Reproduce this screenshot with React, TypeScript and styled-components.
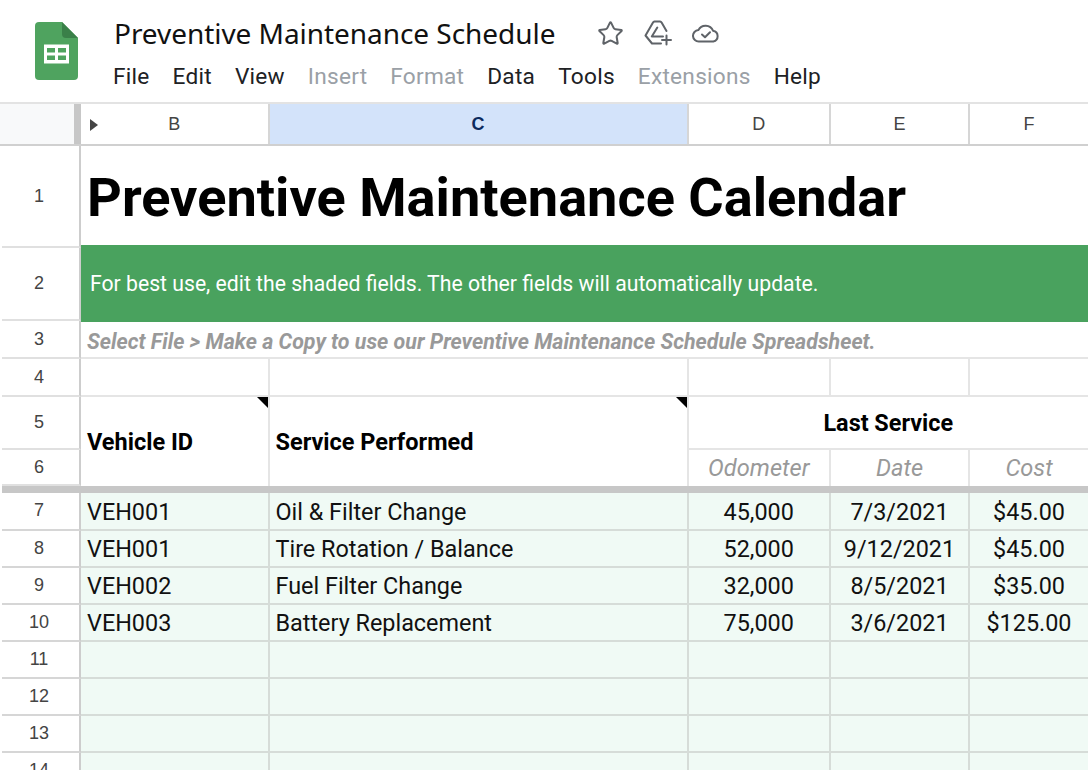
import styled, { createGlobalStyle } from "styled-components";
import { Star } from "lucide-react";

const rows = [
    { n: 7, id: "VEH001", service: "Oil & Filter Change", odo: "45,000", date: "7/3/2021", cost: "$45.00" },
    { n: 8, id: "VEH001", service: "Tire Rotation / Balance", odo: "52,000", date: "9/12/2021", cost: "$45.00" },
    { n: 9, id: "VEH002", service: "Fuel Filter Change", odo: "32,000", date: "8/5/2021", cost: "$35.00" },
    { n: 10, id: "VEH003", service: "Battery Replacement", odo: "75,000", date: "3/6/2021", cost: "$125.00" },
    { n: 11 }, { n: 12 }, { n: 13 }, { n: 14 },
];

const menu = [
    { label: "File" }, { label: "Edit" }, { label: "View" },
    { label: "Insert", off: true }, { label: "Format", off: true },
    { label: "Data" }, { label: "Tools" },
    { label: "Extensions", off: true }, { label: "Help" },
];

const App = () => (
    <Page>
        <GlobalStyle />
        <Header>
            <Logo />
            <HeaderText>
                <TitleRow>
                    <DocTitle>Preventive Maintenance Schedule</DocTitle>
                    <Icons>
                        <Star size={27} strokeWidth={1.8} color="#5f6368" />
                        <DriveAdd />
                        <CloudCheck />
                    </Icons>
                </TitleRow>
                <Menu>
                    {menu.map((m) => (
                        <MenuItem key={m.label} $off={m.off}>{m.label}</MenuItem>
                    ))}
                </Menu>
            </HeaderText>
        </Header>

        <ColumnBar>
            <Corner />
            <ColHead><Arrow />B</ColHead>
            <ColHead $active>C</ColHead>
            <ColHead>D</ColHead>
            <ColHead>E</ColHead>
            <ColHead $last>F</ColHead>
        </ColumnBar>

        <Sheet>
            <RowHead>1</RowHead>
            <TitleCell>Preventive Maintenance Calendar</TitleCell>

            <RowHead>2</RowHead>
            <BannerCell>For best use, edit the shaded fields. The other fields will automatically update.</BannerCell>

            <RowHead>3</RowHead>
            <HintCell>Select File &gt; Make a Copy to use our Preventive Maintenance Schedule Spreadsheet.</HintCell>

            <RowHead>4</RowHead>
            <Cell /><Cell /><Cell /><Cell /><Cell $last />

            <RowHead>5</RowHead>
            <HeadCell>Vehicle ID<Note /></HeadCell>
            <HeadCell>Service Performed<Note /></HeadCell>
            <GroupCell>Last Service</GroupCell>

            <RowHead>6</RowHead>
            <SubCell>Odometer</SubCell>
            <SubCell>Date</SubCell>
            <SubCell $last>Cost</SubCell>

            <FreezeBar />

            {rows.map((r) => (
                <DataRow key={r.n}>
                    <RowHead $shaded>{r.n}</RowHead>
                    <DataCell>{r.id}</DataCell>
                    <DataCell>{r.service}</DataCell>
                    <DataCell $center>{r.odo}</DataCell>
                    <DataCell $center>{r.date}</DataCell>
                    <DataCell $center $last>{r.cost}</DataCell>
                </DataRow>
            ))}
        </Sheet>
    </Page>
);

const Logo = () => (
    <LogoSvg viewBox="0 0 43 58" width="43" height="58">
        <path d="M4 0H27L43 16V54a4 4 0 0 1-4 4H4a4 4 0 0 1-4-4V4a4 4 0 0 1 4-4z" fill="#4fa35f" />
        <path d="M27 0L43 16H31a4 4 0 0 1-4-4z" fill="#3a8049" />
        <path d="M9 22.5H34V41.5H9z" fill="#fff" />
        <path d="M12 26H20V30.5H12zM23 26H31V30.5H23zM12 33.5H20V38H12zM23 33.5H31V38H23z" fill="#4fa35f" />
    </LogoSvg>
);

const DriveAdd = () => (
    <svg viewBox="0 0 28 26" width="28" height="26" fill="none" stroke="#5f6368" strokeWidth="2" strokeLinejoin="round" strokeLinecap="round">
        <path d="M17 23.5H8L1.5 15.5 9 2.5a2 2 0 0 1 1.5-1H16a2 2 0 0 1 1.6 1L22.5 11" />
        <path d="M13.3 7.5L7.8 16.5H19" />
        <path d="M22.5 15.5V24.5M18 20H27" />
    </svg>
);

const CloudCheck = () => (
    <svg viewBox="0 0 28 20" width="28" height="20" fill="none" stroke="#5f6368" strokeWidth="2" strokeLinejoin="round" strokeLinecap="round">
        <path d="M7 18.5a5.7 5.7 0 0 1-.6-11.4A8 8 0 0 1 21 7.7a5.5 5.5 0 0 1 .3 10.8z" />
        <path d="M10 11.5l3 2.8 5-5" />
    </svg>
);

const GlobalStyle = createGlobalStyle`
    html, body {
        margin: 0;
        padding: 0;
        background: #fff;
        overflow: hidden;
    }
    * {
        box-sizing: border-box;
    }
`;

const Page = styled.div`
    width: 1088px;
    height: 770px;
    overflow: hidden;
    font-family: Roboto, "Liberation Sans", sans-serif;
    color: #000;
`;

const Header = styled.header`
    height: 104px;
    display: flex;
    padding: 22px 0 0 35px;
    border-bottom: 2px solid #e3e3e3;
`;

const LogoSvg = styled.svg`
    flex: none;
`;

const HeaderText = styled.div`
    margin: -8px 0 0 35px;
    display: flex;
    flex-direction: column;
`;

const TitleRow = styled.div`
    display: flex;
    align-items: center;
    height: 38px;
`;

const DocTitle = styled.div`
    font-family: "Noto Sans", Roboto, sans-serif;
    font-size: 28px;
    color: #111;
    letter-spacing: -0.05px;
    margin-left: 1px;
`;

const Icons = styled.div`
    display: flex;
    align-items: center;
    gap: 20px;
    margin-left: 42px;
`;

const Menu = styled.nav`
    display: flex;
    gap: 23px;
    margin-top: 10px;
`;

const MenuItem = styled.span<{ $off?: boolean }>`
    font-size: 22.65px;
    line-height: 30px;
    letter-spacing: 0.25px;
    color: ${({ $off }) => ($off ? "#9aa0a6" : "#202124")};
`;

const ColumnBar = styled.div`
    height: 42px;
    display: grid;
    grid-template-columns: 81px 188.5px 419px 142.5px 139px 118px;
    border-bottom: 2px solid #d0d0d0;
`;

const Corner = styled.div`
    background: #f8f9fa;
    border-right: 7px solid #c7c7c7;
`;

const ColHead = styled.div<{ $active?: boolean; $last?: boolean }>`
    position: relative;
    display: flex;
    align-items: center;
    justify-content: center;
    font-family: "Liberation Sans", Arial, sans-serif;
    font-size: 18px;
    font-weight: ${({ $active }) => ($active ? 700 : 400)};
    color: ${({ $active }) => ($active ? "#0b2a5e" : "#444")};
    background: ${({ $active }) => ($active ? "#d3e3fa" : "#fff")};
    border-right: ${({ $last }) => ($last ? "none" : "2px solid #d6d6d6")};
`;

const Arrow = styled.i`
    position: absolute;
    left: 9px;
    top: 15px;
    border-left: 8px solid #444;
    border-top: 6px solid transparent;
    border-bottom: 6px solid transparent;
`;

const Sheet = styled.div`
    margin-left: 2px;
    display: grid;
    grid-template-columns: 79px 188.5px 419px 142.5px 139px 118px;
    grid-template-rows: 102px 73px 38px 38px 53px 36px 7px 37.5px repeat(7, 37px);
`;

const RowHead = styled.div<{ $shaded?: boolean }>`
    display: flex;
    align-items: center;
    justify-content: center;
    padding-right: 3px;
    font-family: "Liberation Sans", Arial, sans-serif;
    font-size: 18px;
    color: #444;
    background: #fff;
    border-right: 2px solid #cdcdcd;
    border-bottom: 2px solid ${({ $shaded }) => ($shaded ? "#d6d6d6" : "#e0e0e0")};
`;

const Cell = styled.div<{ $last?: boolean }>`
    border-bottom: 2px solid #e5e5e5;
    border-right: ${({ $last }) => ($last ? "none" : "2px solid #e5e5e5")};
`;

const TitleCell = styled.div`
    grid-column: 2 / -1;
    display: flex;
    align-items: center;
    padding: 1px 0 0 6px;
    font-size: 54.15px;
    font-weight: 700;
`;

const BannerCell = styled.div`
    grid-column: 2 / -1;
    display: flex;
    align-items: center;
    padding: 0 0 2px 9px;
    font-size: 21.2px;
    color: #fff;
    background: #49a25e;
    box-shadow: 0 -3px 0 #49a25e, 0 1px 0 #49a25e;
    position: relative;
`;

const HintCell = styled(Cell)`
    grid-column: 2 / -1;
    display: flex;
    align-items: center;
    padding: 5px 0 0 6px;
    font-size: 21.4px;
    font-weight: 700;
    font-style: italic;
    color: #999;
    border-right: none;
`;

const HeadCell = styled(Cell)`
    grid-row: span 2;
    position: relative;
    display: flex;
    align-items: center;
    padding-left: 6px;
    font-size: 23.5px;
    font-weight: 700;
    border-bottom: none;
`;

const Note = styled.i`
    position: absolute;
    top: 0;
    right: 0;
    border-top: 11px solid #000;
    border-left: 11px solid transparent;
`;

const GroupCell = styled(Cell)`
    grid-column: span 3;
    display: flex;
    align-items: center;
    justify-content: center;
    font-size: 23.4px;
    font-weight: 700;
    border-right: none;
`;

const SubCell = styled(Cell)`
    display: flex;
    align-items: center;
    justify-content: center;
    font-size: 23.6px;
    font-style: italic;
    color: #999;
    border-bottom: none;
`;

const FreezeBar = styled.div`
    grid-column: 1 / -1;
    background: #c7c7c7;
`;

const DataRow = styled.div`
    display: contents;
`;

const DataCell = styled.div<{ $center?: boolean; $last?: boolean }>`
    display: flex;
    align-items: center;
    justify-content: ${({ $center }) => ($center ? "center" : "flex-start")};
    padding: 2px 0 0 ${({ $center }) => ($center ? "0" : "6px")};
    font-size: 23.4px;
    color: #111;
    background: #f0faf5;
    border-bottom: 2px solid #d6dcd8;
    border-right: ${({ $last }) => ($last ? "none" : "2px solid #d6dcd8")};
`;

export default App;
